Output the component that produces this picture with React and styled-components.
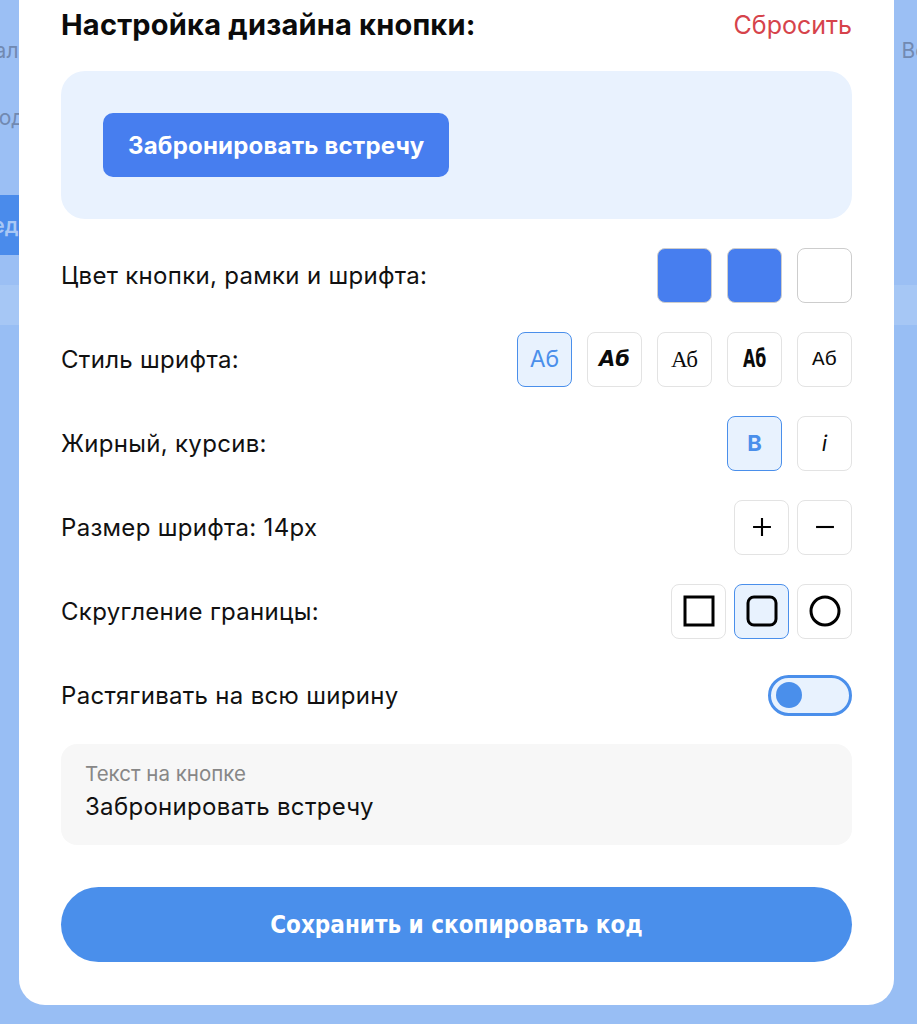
import React from "react";
import styled, { createGlobalStyle } from "styled-components";

const GlobalStyle = createGlobalStyle`
  html, body { margin: 0; padding: 0; }
  body {
    font-family: Inter, "Noto Sans", sans-serif;
    background: #98bef4;
    overflow: hidden;
  }
  * { box-sizing: border-box; }
`;

/* ---------- background page (dimmed behind modal) ---------- */
const BackPage = styled.div`
  width: 100%;
  height: 1024px;
  display: flex;
  flex-direction: column;
  overflow: hidden;
  background: #98bef4;
`;

const BackTop = styled.div`
  height: 285px;
  display: flex;
  justify-content: center;
  background: #9bbff4;
`;

const BackInner = styled.div`
  flex: 0 0 1100px;
  display: flex;
  justify-content: space-between;
`;

const BackCol = styled.div`
  display: flex;
  flex-direction: column;
  align-items: ${(p) => (p.$right ? "flex-start" : "flex-end")};
  width: 110px;
  padding-top: 38px;
  padding-left: ${(p) => (p.$right ? 3 : 0)}px;
`;

const BackText = styled.div`
  font-size: 21px;
  line-height: 26px;
  color: #7189b1;
  margin-bottom: ${(p) => p.$mb || 0}px;
  margin-right: ${(p) => p.$mr || 0}px;
  white-space: nowrap;
`;

const BackButton = styled.div`
  height: 60px;
  padding: 0 30px 0 20px;
  margin-top: 64px;
  margin-right: -30px;
  display: flex;
  align-items: center;
  background: #4a8beb;
  color: #a9c8f5;
  font-size: 21px;
  font-weight: 600;
`;

const BackBand = styled.div`
  height: 40px;
  background: #a6c7f5;
`;

/* ---------- modal ---------- */
const Overlay = styled.div`
  position: fixed;
  inset: 0;
  display: flex;
  justify-content: center;
  align-items: flex-end;
  padding: 0 4px 19px 0;
`;

const Card = styled.div`
  flex: 0 0 875px;
  background: #ffffff;
  border-radius: 26px;
  padding: 40px 42px 43px;
  display: flex;
  flex-direction: column;
`;

const Header = styled.div`
  height: 30px;
  display: flex;
  justify-content: space-between;
  align-items: center;
`;

const Title = styled.h2`
  margin: 0;
  font-size: 29px;
  line-height: 30px;
  font-weight: 700;
  color: #0b0b0b;
  letter-spacing: 0.2px;
`;

const ResetLink = styled.button`
  border: 0;
  background: none;
  padding: 0;
  font-family: inherit;
  font-size: 25px;
  line-height: 30px;
  color: #d6434b;
  cursor: pointer;
`;

const Preview = styled.div`
  margin-top: 31px;
  height: 148px;
  padding: 42px;
  background: #e9f2fe;
  border-radius: 24px;
  display: flex;
  justify-content: flex-start;
`;

const PreviewButton = styled.button`
  height: 64px;
  padding: 0 25px;
  border: 0;
  border-radius: 10px;
  background: #477eef;
  color: #fff;
  font-family: inherit;
  font-size: 24px;
  letter-spacing: 0.2px;
  font-weight: 700;
`;

const Rows = styled.div`
  margin-top: 28px;
  display: flex;
  flex-direction: column;
  gap: 28px;
`;

const Row = styled.div`
  height: 56px;
  display: flex;
  justify-content: space-between;
  align-items: center;
`;

const Label = styled.span`
  font-size: 24px;
  letter-spacing: 0.3px;
  color: #111;
`;

const Controls = styled.div`
  display: flex;
  gap: ${(p) => p.$gap || 15}px;
`;

const Swatch = styled.div`
  width: 55px;
  height: 55px;
  border-radius: 8px;
  border: 1.5px solid #cdcdcd;
  background: ${(p) => p.$color};
`;

const OptionBox = styled.button`
  width: 55px;
  height: 55px;
  padding: 0;
  border-radius: 8px;
  border: 1.5px solid ${(p) => (p.$active ? "#4a8feb" : "#e3e3e3")};
  background: ${(p) => (p.$active ? "#e8f2fe" : "#ffffff")};
  color: ${(p) => (p.$active ? "#4a8feb" : "#0b0b0b")};
  display: flex;
  align-items: center;
  justify-content: center;
  font-size: 22px;
  line-height: 1;
`;

const Sample = styled.span`
  font-family: ${(p) => p.$family};
  font-weight: ${(p) => p.$weight || 400};
  font-style: ${(p) => (p.$italic ? "italic" : "normal")};
  font-size: ${(p) => p.$size || 22}px;
  transform: ${(p) => p.$scale || "none"};
`;

const Toggle = styled.div`
  width: 84px;
  height: 41px;
  border-radius: 21px;
  border: 3px solid #4a8feb;
  background: #e8f2fe;
  padding: 0 5px;
  display: flex;
  align-items: center;
`;

const Knob = styled.div`
  width: 26px;
  height: 26px;
  border-radius: 50%;
  background: #4a8feb;
`;

const Field = styled.div`
  margin-top: 21px;
  height: 101px;
  border-radius: 16px;
  background: #f7f7f7;
  padding: 18px 24px 0;
  display: flex;
  flex-direction: column;
  gap: 6px;
`;

const FieldLabel = styled.span`
  font-size: 20.5px;
  line-height: 24px;
  color: #878787;
`;

const FieldValue = styled.span`
  font-size: 24px;
  line-height: 30px;
  letter-spacing: 0.3px;
  color: #111;
`;

const SaveButton = styled.button`
  margin-top: 42px;
  height: 75px;
  border: 0;
  border-radius: 38px;
  background: #4a8feb;
  color: #fff;
  font-family: "Liberation Sans Narrow", "DejaVu Sans Condensed", "Liberation Sans", sans-serif;
  font-stretch: condensed;
  font-size: 24px;
  font-weight: 700;
`;

const Icon = ({ children, size = 32 }) => (
  <svg width={size} height={size} viewBox="0 0 32 32" fill="none" stroke="#000" strokeWidth="3">
    {children}
  </svg>
);

export default function App() {
  return (
    <>
      <GlobalStyle />
      <BackPage>
        <BackTop>
          <BackInner>
            <BackCol>
              <BackText $mb={41}>Канал</BackText>
              <BackText $mr={-6}>Вход</BackText>
              <BackButton>Вперед</BackButton>
            </BackCol>
            <BackCol $right>
              <BackText>Все</BackText>
            </BackCol>
          </BackInner>
        </BackTop>
        <BackBand />
      </BackPage>

      <Overlay>
        <Card>
          <Header>
            <Title>Настройка дизайна кнопки:</Title>
            <ResetLink>Сбросить</ResetLink>
          </Header>

          <Preview>
            <PreviewButton>Забронировать встречу</PreviewButton>
          </Preview>

          <Rows>
            <Row>
              <Label>Цвет кнопки, рамки и шрифта:</Label>
              <Controls>
                <Swatch $color="#477eef" />
                <Swatch $color="#477eef" />
                <Swatch $color="#ffffff" />
              </Controls>
            </Row>

            <Row>
              <Label>Стиль шрифта:</Label>
              <Controls>
                <OptionBox $active>
                  <Sample $family="Inter, sans-serif" $size={23}>Аб</Sample>
                </OptionBox>
                <OptionBox>
                  <Sample $family='"DejaVu Sans", sans-serif' $weight={700} $italic $size={21}>Аб</Sample>
                </OptionBox>
                <OptionBox>
                  <Sample $family='"Liberation Serif", serif' $size={23}>Аб</Sample>
                </OptionBox>
                <OptionBox>
                  <Sample $family='"DejaVu Sans Condensed", "DejaVu Sans", sans-serif' $weight={900} $size={22} $scale="scaleX(0.8) scaleY(1.1)">Аб</Sample>
                </OptionBox>
                <OptionBox>
                  <Sample $family='"Liberation Mono", monospace' $size={21}>Аб</Sample>
                </OptionBox>
              </Controls>
            </Row>

            <Row>
              <Label>Жирный, курсив:</Label>
              <Controls>
                <OptionBox $active>
                  <Sample $family="Inter, sans-serif" $weight={700}>B</Sample>
                </OptionBox>
                <OptionBox>
                  <Sample $family="Inter, sans-serif" $italic>i</Sample>
                </OptionBox>
              </Controls>
            </Row>

            <Row>
              <Label>Размер шрифта: 14px</Label>
              <Controls $gap={8}>
                <OptionBox>
                  <Icon size={26}>
                    <path d="M16 5v22M5 16h22" strokeWidth="2.6" />
                  </Icon>
                </OptionBox>
                <OptionBox>
                  <Icon size={26}>
                    <path d="M5 16h22" strokeWidth="2.6" />
                  </Icon>
                </OptionBox>
              </Controls>
            </Row>

            <Row>
              <Label>Скругление границы:</Label>
              <Controls $gap={8}>
                <OptionBox>
                  <Icon>
                    <rect x="2" y="2" width="28" height="28" />
                  </Icon>
                </OptionBox>
                <OptionBox $active>
                  <Icon>
                    <rect x="2" y="2" width="28" height="28" rx="6" />
                  </Icon>
                </OptionBox>
                <OptionBox>
                  <Icon>
                    <circle cx="16" cy="16" r="14" />
                  </Icon>
                </OptionBox>
              </Controls>
            </Row>

            <Row>
              <Label>Растягивать на всю ширину</Label>
              <Toggle>
                <Knob />
              </Toggle>
            </Row>
          </Rows>

          <Field>
            <FieldLabel>Текст на кнопке</FieldLabel>
            <FieldValue>Забронировать встречу</FieldValue>
          </Field>

          <SaveButton>Сохранить и скопировать код</SaveButton>
        </Card>
      </Overlay>
    </>
  );
}
